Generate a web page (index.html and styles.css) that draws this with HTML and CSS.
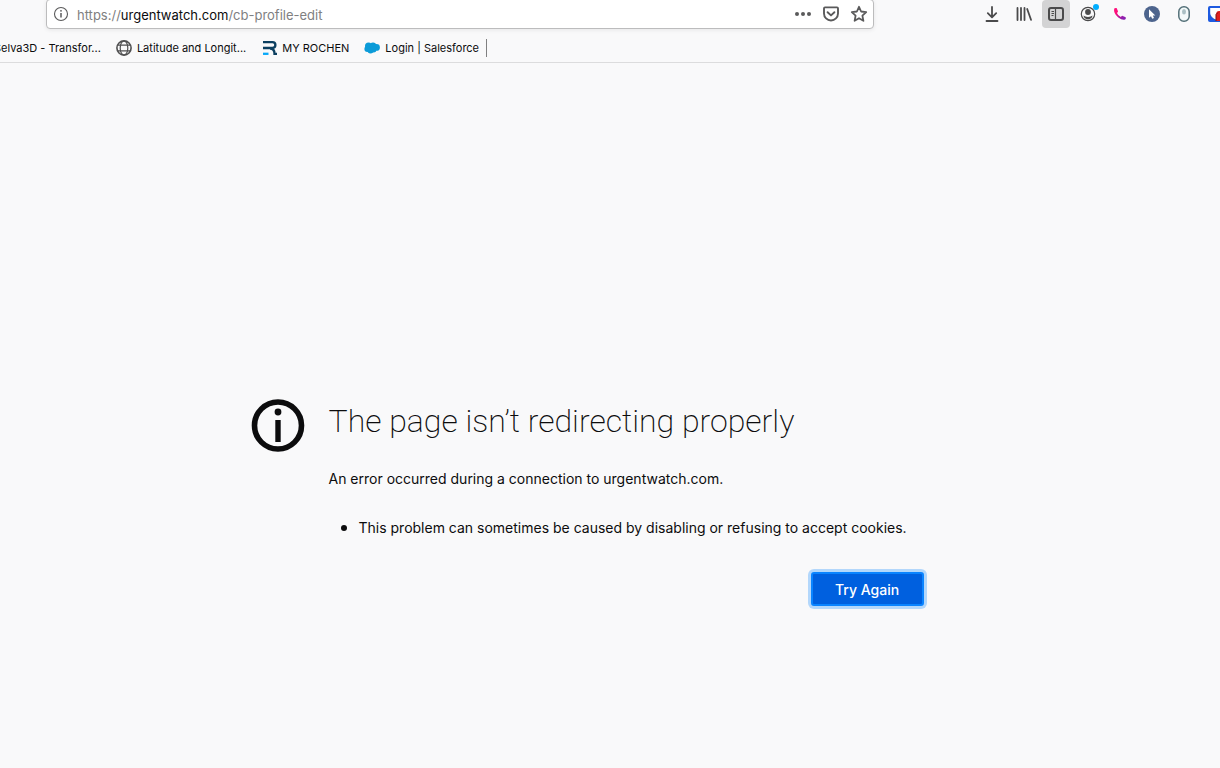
FILE: index.html
```html
<!DOCTYPE html>
<html lang="en">
<head>
<meta charset="utf-8">
<title>Problem loading page</title>
<link rel="stylesheet" href="styles.css">
</head>
<body>
<header class="chrome">
  <div class="navbar">
    <div class="urlbar">
      <button class="url-button" aria-label="Site information">
        <svg width="16" height="16" viewBox="0 0 16 16" fill="none" stroke="#5a5a5b"><circle cx="8" cy="8" r="6.5" stroke-width="1.1"/><path d="M8 7v4.5" stroke-width="1.5"/><circle cx="8" cy="4.8" r=".9" fill="#5a5a5b" stroke="none"/></svg>
      </button>
      <div class="url" role="textbox" aria-label="Address" tabindex="0">https://<span class="domain">urgentwatch.com</span>/cb-profile-edit</div>
      <div class="url-actions">
        <button class="url-button" aria-label="Page actions">
          <svg width="18" height="18" viewBox="0 0 18 18" fill="#5a5a5b"><circle cx="3" cy="9" r="2"/><circle cx="9" cy="9" r="2"/><circle cx="15" cy="9" r="2"/></svg>
        </button>
        <button class="url-button" aria-label="Save to Pocket">
          <svg width="18" height="18" viewBox="0 0 18 18" fill="none" stroke="#5a5a5b" stroke-width="1.9" stroke-linecap="round" stroke-linejoin="round"><path d="M3 2.4h12q1 0 1 1V8.500a7 7 0 0 1-14 0V3.400q0-1 1-1z"/><path d="M5.600 7.200L9 10.400l3.400-3.200"/></svg>
        </button>
        <button class="url-button" aria-label="Bookmark this page">
          <svg width="18" height="18" viewBox="0 0 18 18" fill="none" stroke="#5a5a5b" stroke-width="1.8" stroke-linejoin="round"><path d="M9 1.800l2.100 4.700 5.100.6-3.800 3.500 1 5.200L9 13.200l-4.400 2.600 1-5.200L1.800 7.100l5.100-.6z"/></svg>
        </button>
      </div>
    </div>
    <div class="tools">
      <button class="tool" aria-label="Downloads">
        <svg width="16" height="16" viewBox="0 0 16 16" fill="none" stroke="#4a4a4b" stroke-width="1.8" stroke-linecap="round" stroke-linejoin="round"><path d="M8 1v10M3.800 7.200L8 11.300l4.200-4.100M2.500 15h11"/></svg>
      </button>
      <button class="tool" aria-label="Library">
        <svg width="16" height="16" viewBox="0 0 16 16" fill="none" stroke="#4a4a4b" stroke-width="1.8" stroke-linecap="round"><path d="M1.500 2v12M5 2v12M8.500 2v12M11.200 3l3.800 10.800"/></svg>
      </button>
      <button class="tool tool-active" aria-label="Sidebars">
        <svg width="16" height="16" viewBox="0 0 16 16" fill="none" stroke="#4a4a4b"><rect x="1" y="2" width="14" height="12" rx="2" stroke-width="2"/><path d="M7.500 2v12" stroke-width="1.200"/><path d="M3.500 5.500h2.500M3.500 7.500h2.500M3.500 9.500h2" stroke-width="1"/></svg>
      </button>
      <button class="tool" aria-label="Account">
        <svg width="16" height="16" viewBox="0 0 16 16"><circle cx="8" cy="8" r="6.700" fill="none" stroke="#4a4a4b" stroke-width="1.200"/><circle cx="8" cy="6" r="2.900" fill="#4a4a4b"/><path d="M3.500 9.500q1.300 1.400 4.500 1.400t4.500-1.400q-.5 3.800-4.500 3.900-4-.1-4.500-3.900z" fill="#4a4a4b"/></svg>
        <span class="badge"></span>
      </button>
      <button class="tool" aria-label="Phone">
        <svg width="16" height="16" viewBox="0 0 16 16"><defs><linearGradient id="phone" x1="0" y1="0" x2="1" y2="1"><stop offset=".3" stop-color="#ff0f7b"/><stop offset=".8" stop-color="#8a20b0"/></linearGradient></defs><path d="M2.200 2.500q1.200-1 2.400-.4L6 5.200q.2.800-1 1.700.8 2.700 3.900 4 1-1.300 1.900-1l2.900 1.400q.5 1.600-.6 2.300-2.800 1-6.800-2Q1.200 7.300 2.200 2.500z" fill="url(#phone)"/></svg>
      </button>
      <button class="tool" aria-label="Pointer">
        <svg width="16" height="16" viewBox="0 0 16 16"><circle cx="8" cy="8" r="8" fill="#4d648d"/><path d="M5 3.200v8.600l2-1.600 1.200 2.600 1.800-.8-1.200-2.500h2.500z" fill="#fff"/></svg>
      </button>
      <button class="tool" aria-label="Mouse">
        <svg width="16" height="16" viewBox="0 0 16 16"><rect x="2.800" y=".8" width="10.400" height="14.400" rx="5" fill="#f4fafa" stroke="#547078" stroke-width="1.500"/><ellipse cx="8" cy="5.800" rx="2" ry="2.700" fill="#abc0c4"/></svg>
      </button>
      <button class="tool" aria-label="Shield">
        <svg width="16" height="16" viewBox="0 0 16 16"><rect width="16" height="16" rx="2" fill="#1d5ae0"/><path d="M2.200 2H14v7l-5 5q-6.800-2.500-6.800-7z" fill="#fff"/><path d="M8 9q0-4 3-4h5v10H8z" fill="#e02020"/><path d="M8 15V8.500l2-2" fill="none" stroke="#7b1010"/></svg>
      </button>
    </div>
  </div>
  <nav class="bookmarks" aria-label="Bookmarks">
    <a class="bookmark first" href="#">Selva3D - Transfor...</a>
    <a class="bookmark" href="#">
      <svg width="16" height="16" viewBox="0 0 16 16" fill="none" stroke="#505051" stroke-width="1.200"><circle cx="8" cy="8" r="7.100" stroke-width="1.600"/><ellipse cx="8" cy="8" rx="3.800" ry="7"/><path d="M2 5.200h12M2 10.800h12"/></svg>
      <span>Latitude and Longit...</span>
    </a>
    <a class="bookmark" href="#">
      <svg width="16" height="16" viewBox="0 0 16 16" fill="none" stroke="#0c3f60" stroke-width="2.300"><path d="M2 2.200h9.500a2.600 2.600 0 0 1 0 5.800H2M9 8.500q4.500 0 4.500 5.300h2.500"/><path d="M2 13.800h5.500" stroke="#08a8f8"/></svg>
      <span>MY ROCHEN</span>
    </a>
    <a class="bookmark" href="#">
      <svg width="16" height="16" viewBox="0 0 16 16" fill="#0c9bd8"><circle cx="4.500" cy="6" r="3.500"/><circle cx="9" cy="5.700" r="3.200"/><circle cx="12.500" cy="7.400" r="3.400"/><circle cx="3.400" cy="9" r="3"/><circle cx="6.500" cy="10.500" r="3"/><circle cx="9.500" cy="9.500" r="3"/></svg>
      <span>Login | Salesforce</span>
    </a>
    <span class="divider"></span>
  </nav>
</header>
<main class="page">
  <section class="error">
    <svg class="error-icon" width="54" height="54" viewBox="0 0 54 54"><circle cx="27" cy="26.500" r="23.500" fill="none" stroke="#0c0c0d" stroke-width="5.600"/><circle cx="27" cy="13" r="3.400" fill="#0c0c0d"/><path d="M24.300 21h5.400v22h-5.400z" fill="#0c0c0d"/></svg>
    <div class="error-body">
      <h1>The page isn’t redirecting properly</h1>
      <p>An error occurred during a connection to urgentwatch.com.</p>
      <ul>
        <li>This problem can sometimes be caused by disabling or refusing to accept cookies.</li>
      </ul>
      <button class="retry">Try Again</button>
    </div>
  </section>
</main>
</body>
</html>
```
FILE: styles.css
```css
* {
  box-sizing: border-box;
}

body {
  margin: 0;
  min-height: 100vh;
  overflow: hidden;
  background: #f9f9fa;
  color: #0c0c0d;
  font-family: Inter, "Liberation Sans", sans-serif;
  font-size: 14px;
}

button {
  border: 0;
  padding: 0;
  background: none;
  font: inherit;
}

svg {
  display: block;
  flex: none;
}

.chrome {
  border-bottom: 1px solid #dcdcdd;
}

.navbar {
  display: flex;
  align-items: flex-start;
  gap: 104px;
  height: 34px;
  padding-left: 46px;
}

.urlbar {
  flex: 1;
  display: flex;
  align-items: center;
  gap: 8px;
  height: 30px;
  margin-top: -1px;
  padding: 0 5px 0 6px;
  border: 1px solid #bcbcbd;
  border-radius: 4px;
  background: #fff;
  box-shadow: 0 1px 4px rgba(0, 0, 0, 0.08);
}

.url {
  flex: 1;
  padding-top: 2px;
  color: #808081;
  font-size: 13px;
  line-height: 20px;
  white-space: nowrap;
}

.domain {
  color: #0c0c0d;
}

.url-actions {
  display: flex;
  gap: 10px;
}

.tools {
  display: flex;
  gap: 4px;
  margin-right: -10px;
}

.tool {
  position: relative;
  display: grid;
  place-items: center;
  width: 28px;
  height: 28px;
  border-radius: 4px;
}

.tool-active {
  background: #d3d3d4;
}

.badge {
  position: absolute;
  top: 4px;
  right: 3px;
  width: 6px;
  height: 6px;
  border-radius: 50%;
  background: #00aeff;
}

.bookmarks {
  display: flex;
  align-items: center;
  gap: 15px;
  height: 28px;
  font-size: 11px;
}

.bookmark {
  display: flex;
  align-items: center;
  gap: 5px;
  color: #0c0c0d;
  text-decoration: none;
  white-space: nowrap;
}

.first {
  margin-left: -6px;
}

.divider {
  width: 1px;
  height: 18px;
  margin-left: -8px;
  background: #808081;
}

.page {
  display: flex;
  justify-content: center;
  padding: 336px 42px 0 0;
}

.error {
  display: flex;
  gap: 24px;
  width: 100%;
  max-width: 677px;
}

.error-body {
  flex: 1;
  display: flex;
  flex-direction: column;
}

h1 {
  margin: 0;
  font-family: Roboto, sans-serif;
  font-size: 32px;
  font-weight: 200;
  line-height: 44px;
}

p {
  margin: 24px 0 0;
  line-height: 24px;
}

ul {
  margin: 24px 0 0;
  padding-left: 30px;
  line-height: 24px;
}

li::marker {
  font-size: 18px;
}

.retry {
  align-self: flex-end;
  width: 113px;
  height: 34px;
  margin: 32px 4px 0 0;
  border: 2px solid #0a84ff;
  border-radius: 3px;
  background: #0060df;
  box-shadow: 0 0 0 3px #b3d7fb;
  color: #fff;
  font-weight: 500;
}
```
